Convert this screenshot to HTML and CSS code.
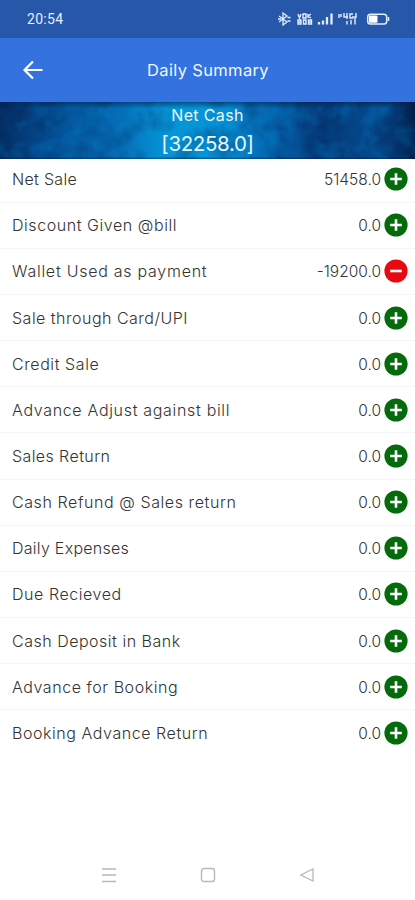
FILE: index.html
```html
<!DOCTYPE html>
<html lang="en">
<head>
<meta charset="utf-8">
<title>Daily Summary</title>
<link rel="stylesheet" href="styles.css">
</head>
<body>
<svg class="defs" width="0" height="0" aria-hidden="true">
  <symbol id="plus" viewBox="0 0 24 24"><circle cx="12" cy="12" r="11.6" fill="#056a0b"/><path d="M12 6.2v11.6M6.2 12h11.6" stroke="#fff" stroke-width="2.6"/></symbol>
  <symbol id="minus" viewBox="0 0 24 24"><circle cx="12" cy="12" r="11.6" fill="#e90810"/><path d="M6.2 12h11.6" stroke="#fff" stroke-width="2.6"/></symbol>
</svg>
<header class="status">
  <span class="clock">20:54</span>
  <svg class="indicators" width="114" height="16" viewBox="0 0 114 16" fill="none" stroke="#e4edfc">
    <path d="M2 5l8 6-4 3V2l4 3-8 6" stroke-width="1.3"/><path d="M10.500 6.500h3M10.500 10h3M1 8h3" stroke-width="1.5"/>
    <path d="M21 3l1.500 4L24 3M26 3h3v4h-3zM31 3v4M31 5l3-2M31 5l3 2M21 9h3v4h-3zM21 11h3M26.500 9h2.500v4h-2.500zM31.500 9h3v4h-3zM31.500 11h3" stroke-width="1.4"/>
    <path d="M42 11v2.500M46 9.500v4M50 6v7.500M54.500 2.500v11" stroke-width="2.3"/>
    <path d="M62 3v4M64 3v3M67 2v4h4M70 2v6M76 3h-3v4h3V5M79 2v5M70 10v3.500M74 9v4.500M78 5v8.500" stroke-width="1.4"/>
    <rect x="90.700" y="3.200" width="19" height="9.800" rx="2.800" stroke-width="1.500"/><rect x="92" y="4.500" width="8.500" height="7.200" rx="1" fill="#fff" stroke="none"/><path d="M111.500 6v4" stroke-width="1.500"/>
  </svg>
</header>
<nav class="bar">
  <svg class="back" width="22" height="22" viewBox="0 0 22 22" fill="none" stroke="#fff" stroke-width="2.2"><path d="M21.500 11H3.500M12 2.500L3.500 11l8.500 8.500"/></svg>
  <h1>Daily Summary</h1>
</nav>
<section class="banner">
  <svg class="texture" width="415" height="57" viewBox="0 0 415 57" preserveAspectRatio="none">
    <defs>
      <linearGradient id="sea"><stop offset="0" stop-color="#033066"/><stop offset=".1" stop-color="#034b90"/><stop offset=".3" stop-color="#0570b9"/><stop offset=".4" stop-color="#0596d8"/><stop offset=".53" stop-color="#0594d7"/><stop offset=".65" stop-color="#0465b0"/><stop offset=".78" stop-color="#043b7a"/><stop offset=".92" stop-color="#044c90"/><stop offset="1" stop-color="#021c48"/></linearGradient>
      <linearGradient id="edge" x2="0" y2="1"><stop offset="0" stop-color="#02173d" stop-opacity=".5"/><stop offset=".12" stop-color="#02173d" stop-opacity="0"/><stop offset=".96" stop-color="#02173d" stop-opacity="0"/><stop offset="1" stop-color="#02173d" stop-opacity=".5"/></linearGradient>
      <filter id="dark" x="0" y="0" width="100%" height="100%" color-interpolation-filters="sRGB"><feTurbulence type="fractalNoise" baseFrequency=".035" numOctaves="4" seed="8"/><feColorMatrix values="0 0 0 0 .01  0 0 0 0 .1  0 0 0 0 .3  .9 0 0 0 -.36"/></filter>
      <filter id="light" x="0" y="0" width="100%" height="100%" color-interpolation-filters="sRGB"><feTurbulence type="fractalNoise" baseFrequency=".05" numOctaves="4" seed="21"/><feColorMatrix values="0 0 0 0 0  0 0 0 0 .55  0 0 0 0 .85  0 .8 0 0 -.36"/></filter>
    </defs>
    <rect width="415" height="57" fill="url(#sea)"/>
    <rect width="415" height="57" filter="url(#dark)"/>
    <rect width="415" height="57" filter="url(#light)"/>
    <rect width="415" height="57" fill="url(#edge)"/>
  </svg>
  <div class="caption">Net Cash</div>
  <div class="total">[32258.0]</div>
</section>
<main class="rows">
  <div class="row"><span>Net Sale</span><b>51458.0</b><svg><use href="#plus"/></svg></div>
  <div class="row"><span>Discount Given @bill</span><b>0.0</b><svg><use href="#plus"/></svg></div>
  <div class="row"><span>Wallet Used as payment</span><b>-19200.0</b><svg><use href="#minus"/></svg></div>
  <div class="row"><span>Sale through Card/UPI</span><b>0.0</b><svg><use href="#plus"/></svg></div>
  <div class="row"><span>Credit Sale</span><b>0.0</b><svg><use href="#plus"/></svg></div>
  <div class="row"><span>Advance Adjust against bill</span><b>0.0</b><svg><use href="#plus"/></svg></div>
  <div class="row"><span>Sales Return</span><b>0.0</b><svg><use href="#plus"/></svg></div>
  <div class="row"><span>Cash Refund @ Sales return</span><b>0.0</b><svg><use href="#plus"/></svg></div>
  <div class="row"><span>Daily Expenses</span><b>0.0</b><svg><use href="#plus"/></svg></div>
  <div class="row"><span>Due Recieved</span><b>0.0</b><svg><use href="#plus"/></svg></div>
  <div class="row"><span>Cash Deposit in Bank</span><b>0.0</b><svg><use href="#plus"/></svg></div>
  <div class="row"><span>Advance for Booking</span><b>0.0</b><svg><use href="#plus"/></svg></div>
  <div class="row"><span>Booking Advance Return</span><b>0.0</b><svg><use href="#plus"/></svg></div>
</main>
<footer class="system">
  <svg width="16" height="16" viewBox="0 0 16 16" fill="none" stroke="#b8b8b8" stroke-width="1.400"><path d="M1 2h14M1 8h14M1 14.500h14"/></svg>
  <svg width="16" height="16" viewBox="0 0 16 16" fill="none" stroke="#b8b8b8" stroke-width="1.400"><rect x="1.500" y="1.500" width="13" height="13" rx="2.500"/></svg>
  <svg width="16" height="16" viewBox="0 0 16 16" fill="none" stroke="#b8b8b8" stroke-width="1.300"><path d="M14 2v12L1.800 8z"/></svg>
</footer>
</body>
</html>
```
FILE: styles.css
```css
* { box-sizing: border-box; }
body {
  margin: 0;
  height: 900px;
  display: flex;
  flex-direction: column;
  overflow: hidden;
  background: #fff;
  color: #333;
  font-family: Inter, "Open Sans", sans-serif;
}
.defs { position: absolute; }
.status {
  height: 37.500px;
  flex: none;
  display: flex;
  align-items: center;
  justify-content: space-between;
  padding: 0 24px 0 27px;
  background: #2657a9;
}
.clock { color: #e6eefc; font: 400 14px/20px Roboto, sans-serif; letter-spacing: 0.3px; }
.bar {
  height: 64.500px;
  flex: none;
  display: grid;
  grid-template-columns: 44px 1fr 43px;
  align-items: center;
  background: #3472df;
}
.back { margin-left: 21px; }
.bar h1 {
  margin: 0;
  text-align: center;
  color: #f1f6ff;
  font-size: 16.500px;
  font-weight: 400;
  letter-spacing: 0.350px;
}
.banner {
  position: relative;
  height: 57px;
  flex: none;
  color: #e9f6ff;
  text-align: center;
}
.texture { position: absolute; inset: 0; }
.caption, .total { position: relative; }
.caption { padding-top: 2px; font-size: 16px; line-height: 22px; letter-spacing: 0.35px; }
.total { font-size: 20.500px; line-height: 36px; letter-spacing: -0.350px; }
.rows { flex: none; }
.row {
  height: 46.150px;
  display: flex;
  align-items: center;
  padding: 0 7px 0 12px;
  border-bottom: 1px solid #f5f5f5;
  font-size: 15.500px;
  font-weight: 300;
  white-space: nowrap;
}
.row:first-child { height: 43.700px; padding-bottom: 2px; }
.row:last-child { border-bottom-color: #fcfcfc; }
.row span { flex: 1; font-size: 16px; line-height: 20px; letter-spacing: 0.56px; }
.row:nth-child(1) span { letter-spacing: 0.31px; }
.row:nth-child(3) span { letter-spacing: 0.74px; }
.row:nth-child(4) span { letter-spacing: 0.49px; }
.row:nth-child(5) span { letter-spacing: 0.58px; }
.row:nth-child(6) span { letter-spacing: 0.68px; }
.row:nth-child(7) span { letter-spacing: 0.41px; }
.row:nth-child(8) span { letter-spacing: 0.58px; }
.row:nth-child(9) span { letter-spacing: 0.27px; }
.row:nth-child(11) span { letter-spacing: 0.51px; }
.row:nth-child(13) span { letter-spacing: 0.56px; }
.row b { font-weight: 300; line-height: 20px; padding-top: 2px; margin-right: 3px; }
.row svg { width: 24px; height: 24px; flex: none; }
.system {
  height: 50px;
  margin-top: auto;
  display: flex;
  justify-content: center;
  align-items: center;
  gap: 83px;
}
```
